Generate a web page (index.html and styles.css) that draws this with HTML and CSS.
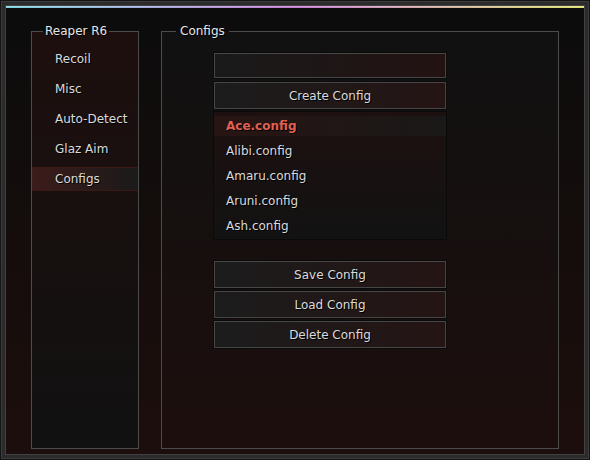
FILE: index.html
```html
<!DOCTYPE html>
<html lang="en">
<head>
    <meta charset="UTF-8">
    <title>Reaper R6</title>
    <link rel="stylesheet" href="styles.css">
</head>
<body>

<div class="window">
    <div class="frame">
        <div class="screen">
            <!-- coloured strip along the top -->
            <div class="accent"></div>

            <div class="content">
                <!-- left menu -->
                <fieldset class="group side">
                    <legend>Reaper R6</legend>
                    <ul class="nav">
                        <li>Recoil</li>
                        <li>Misc</li>
                        <li>Auto-Detect</li>
                        <li>Glaz Aim</li>
                        <li class="active">Configs</li>
                    </ul>
                </fieldset>

                <!-- config page -->
                <fieldset class="group main">
                    <legend>Configs</legend>
                    <div class="column">
                        <input type="text" class="field">
                        <button class="btn">Create Config</button>

                        <ul class="list">
                            <li class="selected">Ace.config</li>
                            <li>Alibi.config</li>
                            <li>Amaru.config</li>
                            <li>Aruni.config</li>
                            <li>Ash.config</li>
                        </ul>

                        <div class="actions">
                            <button class="btn">Save Config</button>
                            <button class="btn">Load Config</button>
                            <button class="btn">Delete Config</button>
                        </div>
                    </div>
                </fieldset>
            </div>
        </div>
    </div>
</div>

</body>
</html>
```

FILE: styles.css
```css
/* Grundlayout */
body {
    margin: 0;
    font-family: 'DejaVu Sans', Verdana, sans-serif;
    font-size: 12px;
    color: #dadada;
    background: #0c0c0c;
}

.window {
    width: 590px;
    height: 460px;
    box-sizing: border-box;
    border: 1px solid #141414;
    background: #2b2b2b;
}

.frame {
    height: 100%;
    box-sizing: border-box;
    border: 1px solid #3c3c3c;
    padding: 3px;
}

.screen {
    height: 100%;
    box-sizing: border-box;
    border: 1px solid #404040;
    background: linear-gradient(180deg, #0c0c0c, #1c0e0c);
    display: flex;
    flex-direction: column;
}

.accent {
    height: 2px;
    flex-shrink: 0;
    background: linear-gradient(90deg, #7ad4de, #c879d6 50%, #dbe26b);
    box-shadow: inset 0 1px 0 rgba(255, 255, 255, 0.25);
}

.content {
    flex: 1;
    display: flex;
    gap: 22px;
    padding: 16px 25px 5px;
    min-height: 0;
}

/* Gruppenboxen */
.group {
    margin: 0;
    padding: 0;
    border: 1px solid #4c4c4c;
    min-width: 0;
}

.group legend {
    line-height: 14px;
    color: #e6e6e6;
    text-shadow: 1px 1px 0 #000;
}

.side {
    width: 108px;
    box-sizing: border-box;
    background: linear-gradient(180deg, #1d0f0e, #111111);
}

.side legend {
    margin-left: 11px;
    padding: 0 2px;
}

.main {
    width: 398px;
    box-sizing: border-box;
    background: linear-gradient(180deg, #111111, #1c0e0d);
}

.main legend {
    margin-left: 14px;
    padding: 0 4px;
}

/* Menü links */
.nav {
    list-style: none;
    margin: 0;
    padding: 9px 0 0;
}

.nav li {
    height: 24px;
    line-height: 24px;
    margin-bottom: 6px;
    padding-left: 23px;
    text-shadow: 1px 1px 0 #000;
}

.nav li.active {
    height: 22px;
    line-height: 22px;
    border-top: 1px solid #3a1816;
    border-bottom: 1px solid #3a1816;
    background: linear-gradient(90deg, #3b1c1a, #1b1a1a);
}

/* Inhalt rechts */
.column {
    width: 232px;
    margin: 15px 0 0 52px;
}

.field,
.btn {
    display: block;
    width: 100%;
    box-sizing: border-box;
    border: 1px solid #464646;
    box-shadow: 0 0 0 1px #0a0a0a;
    background: linear-gradient(90deg, #1c1c1c, #251414);
    outline: none;
    margin: 0;
}

.field {
    height: 25px;
    margin-bottom: 4px;
    background: linear-gradient(90deg, #1a1a1a, #231212);
}

.btn {
    height: 27px;
    padding: 0;
    font-family: inherit;
    font-size: 12px;
    color: #dadada;
    text-shadow: 1px 1px 0 #000;
}

.list {
    list-style: none;
    margin: 3px 0 0;
    padding: 4px 0 3px;
    box-shadow: 0 0 0 1px #0a0a0a;
    background: linear-gradient(180deg, #1e1010, #121212);
}

.list li {
    height: 20px;
    line-height: 20px;
    margin-bottom: 5px;
    padding-left: 12px;
    text-shadow: 1px 1px 0 #000;
}

.list li:last-child {
    margin-bottom: 0;
}

.list li.selected {
    color: #e2604f;
    font-weight: bold;
    background: linear-gradient(90deg, #271513, #1a1818);
}

.actions {
    margin-top: 22px;
    display: flex;
    flex-direction: column;
    gap: 3px;
}
```
